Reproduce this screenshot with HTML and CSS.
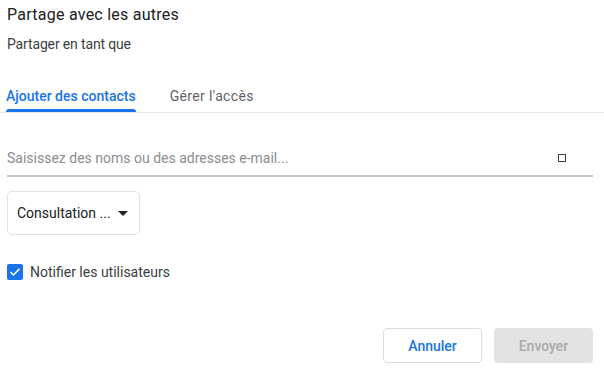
FILE: index.html
```html
<!DOCTYPE html>
<html lang="fr">

<head>
    <meta charset="UTF-8" />
    <meta name="viewport" content="width=device-width, initial-scale=1.0" />
    <title>Partage avec les autres</title>
    <link rel="stylesheet" href="styles.css">
</head>

<body>
    <div class="dialog">
        <h1 class="title">Partage avec les autres</h1>
        <p class="subtitle">Partager en tant que</p>

        <div class="tabs">
            <button class="tab active">Ajouter des contacts</button>
            <button class="tab">Gérer l'accès</button>
        </div>

        <div class="field">
            <input class="field-input" type="text" placeholder="Saisissez des noms ou des adresses e-mail..." />
            <span class="field-icon"></span>
        </div>

        <button class="select">
            Consultation ...
            <svg class="caret" width="10" height="5" viewBox="0 0 10 5">
                <path d="M0 0 L10 0 L5 5 Z" fill="#202124" />
            </svg>
        </button>

        <label class="check">
            <span class="check-box">
                <svg width="12" height="10" viewBox="0 0 12 10">
                    <path d="M1.5 5.2 L4.5 8 L10.5 1.8" fill="none" stroke="#fff" stroke-width="1.6" />
                </svg>
            </span>
            Notifier les utilisateurs
        </label>

        <div class="actions">
            <button class="btn btn-outline">Annuler</button>
            <button class="btn btn-disabled" disabled>Envoyer</button>
        </div>
    </div>
</body>

</html>
```

FILE: styles.css
```css
html {
    -webkit-font-smoothing: antialiased;
    font-family: Roboto, "Liberation Sans", Arial, sans-serif;
    box-sizing: border-box;
    height: 100%;
}

*,
*:before,
*:after {
    box-sizing: inherit;
}

:root {
    --blue: #1a73e8;
    --text: #3c4043;
}

body {
    margin: 0;
    background: #fff;
    color: var(--text);
}

.dialog {
    padding: 5px 11px 0 7px;
}

.title {
    margin: 0;
    font-size: 16px;
    font-weight: 400;
    line-height: 20px;
    letter-spacing: 0.25px;
    color: #202124;
}

.subtitle {
    margin: 9px 0 0;
    font-size: 14px;
    line-height: 20px;
    letter-spacing: -0.15px;
}

.tabs {
    display: flex;
    gap: 32px;
    margin: 32px -11px 0 -7px;
    padding-left: 6px;
    border-bottom: 1px solid #ebebeb;
}

.tab {
    position: relative;
    border: 0;
    background: none;
    padding: 0 0 6px;
    font-family: inherit;
    font-size: 14px;
    font-weight: 400;
    line-height: 20px;
    letter-spacing: 0.35px;
    color: #5f6368;
    cursor: pointer;
}

.tab.active {
    font-weight: 500;
    letter-spacing: 0;
    color: var(--blue);
}

.tab.active:after {
    content: "";
    position: absolute;
    left: 0;
    right: 0;
    bottom: 0;
    height: 3px;
    border-radius: 3px 3px 0 0;
    background: var(--blue);
}

.tab + .tab {
    margin-left: 2px;
}

.field {
    display: flex;
    align-items: center;
    margin-top: 35px;
    border-bottom: 2px solid #c6c6c6;
    height: 29px;
}

.field-input {
    flex: 1;
    border: 0;
    outline: none;
    padding: 0;
    font-family: inherit;
    font-size: 14px;
    line-height: 20px;
    margin-bottom: 8px;
}

.field-input::placeholder {
    color: #8a8d91;
}

.field-icon {
    width: 8px;
    height: 8px;
    border: 1.5px solid #3c4043;
    margin: 0 27px 8px 0;
}

.select {
    display: flex;
    align-items: center;
    gap: 7px;
    margin-top: 14px;
    width: 133px;
    height: 44px;
    padding: 0 0 0 9px;
    border: 1px solid #dfe1e5;
    border-radius: 5px;
    background: #fff;
    font-family: inherit;
    font-size: 14px;
    color: #202124;
}

.check {
    display: flex;
    align-items: center;
    gap: 7px;
    margin-top: 29px;
    font-size: 14px;
    line-height: 16px;
}

.check-box {
    display: flex;
    align-items: center;
    justify-content: center;
    width: 16px;
    height: 16px;
    border-radius: 2px;
    background: var(--blue);
}

.actions {
    display: flex;
    justify-content: flex-end;
    gap: 12px;
    margin-top: 48px;
}

.btn {
    width: 99px;
    height: 35px;
    border-radius: 4px;
    font-family: inherit;
    font-size: 14px;
    font-weight: 500;
}

.btn-outline {
    border: 1px solid #dadce0;
    background: #fff;
    color: var(--blue);
}

.btn-disabled {
    border: 0;
    background: #e3e3e3;
    color: #a9a9a9;
}
```
